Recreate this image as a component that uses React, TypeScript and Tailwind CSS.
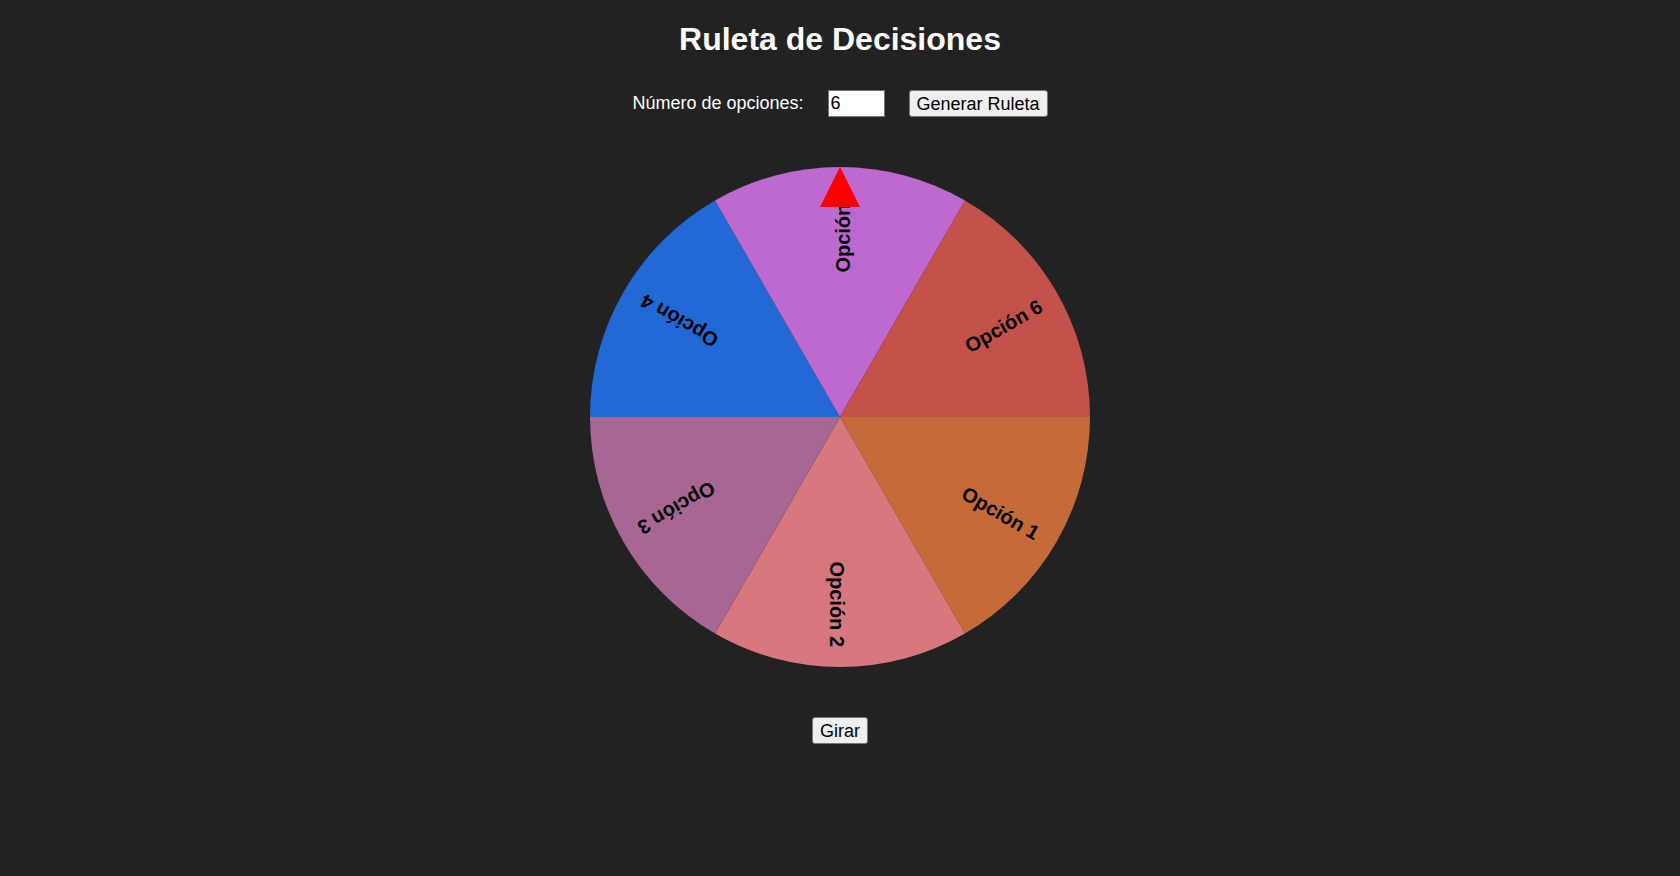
import { useState } from "react";

const COLORS = ["#c56b3a", "#d6787e", "#a86693", "#2369d6", "#be69cf", "#c4524a"];

function Wheel({ count }: { count: number }) {
  const r = 250;
  const step = 360 / count;

  const point = (deg: number) => {
    const rad = (deg * Math.PI) / 180;
    return [r + r * Math.cos(rad), r + r * Math.sin(rad)];
  };

  return (
    <div className="relative w-[500px] h-[500px]">
      <svg width="500" height="500" viewBox="0 0 500 500" className="block">
        {Array.from({ length: count }).map((_, i) => {
          const [x0, y0] = point(i * step);
          const [x1, y1] = point((i + 1) * step);
          return (
            <path
              key={i}
              d={`M${r} ${r} L${x0} ${y0} A${r} ${r} 0 0 1 ${x1} ${y1} Z`}
              fill={COLORS[i % COLORS.length]}
            />
          );
        })}
        {Array.from({ length: count }).map((_, i) => (
          <text
            key={i}
            transform={`translate(${r} ${r}) rotate(${i * step + step / 2})`}
            x={230}
            y={10}
            textAnchor="end"
            fontFamily="'Liberation Sans', Arial, sans-serif"
            fontWeight="bold"
            fontSize="20"
            fill="#000"
          >
            Opción {i + 1}
          </text>
        ))}
      </svg>
      {/* puntero */}
      <div className="absolute top-0 left-[230px] w-0 h-0 border-l-[20px] border-r-[20px] border-b-[40px] border-l-transparent border-r-transparent border-b-[#ff0000]" />
    </div>
  );
}

export default function App() {
  const [num, setNum] = useState("6");
  const [count, setCount] = useState(6);

  return (
    <div className="min-h-screen bg-[#222222] text-white font-['Liberation_Sans',Arial,sans-serif] flex flex-col items-center">
      <h1 className="text-[32px] font-bold leading-[normal] mt-[21.44px] mb-[21.44px]">
        Ruleta de Decisiones
      </h1>

      <div className="mt-[10px] flex items-center">
        <label className="text-[18px] leading-[normal]">Número de opciones:</label>
        <input
          type="number"
          value={num}
          onChange={(e) => setNum(e.target.value)}
          className="ml-[24px] w-[57px] h-[27px] px-[2px] text-[18px] bg-white text-black border border-[#767676] outline-none [appearance:textfield] [&::-webkit-inner-spin-button]:appearance-none"
        />
        <button
          onClick={() => {
            const n = parseInt(num, 10);
            if (n > 1) setCount(n);
          }}
          className="ml-[24px] h-[27px] px-[7px] text-[18px] bg-[#efefef] text-black border border-[#767676] rounded-[3px]"
        >
          Generar Ruleta
        </button>
      </div>

      <div className="mt-[50px]">
        <Wheel count={count} />
      </div>

      <button className="mt-[50px] h-[27px] px-[7px] text-[18px] bg-[#efefef] text-black border border-[#767676] rounded-[3px]">
        Girar
      </button>
    </div>
  );
}
